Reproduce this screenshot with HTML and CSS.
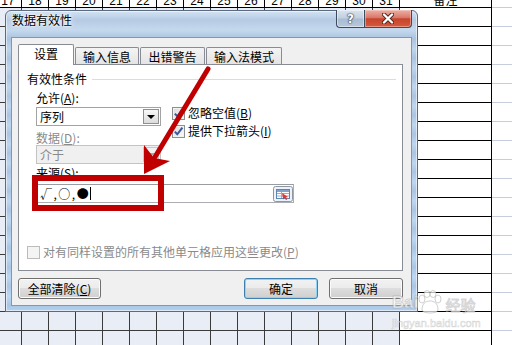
FILE: index.html
```html
<!DOCTYPE html>
<html lang="zh-CN">
    <head>
        <meta charset="UTF-8">
        <meta name="viewport" content="width=device-width, initial-scale=1.0">
        <title>数据有效性</title>
        <link rel="stylesheet" href="styles.css">
    </head>
    <body>

<!-- worksheet behind the dialog -->
<div class="sheet">
    <div class="head">
        <div class="nums">
            <div class="hc"><span>17</span></div>
            <div class="hc"><span>18</span></div>
            <div class="hc"><span>19</span></div>
            <div class="hc"><span>20</span></div>
            <div class="hc"><span>21</span></div>
            <div class="hc"><span>22</span></div>
            <div class="hc"><span>23</span></div>
            <div class="hc"><span>24</span></div>
            <div class="hc"><span>25</span></div>
            <div class="hc"><span>26</span></div>
            <div class="hc"><span>27</span></div>
            <div class="hc"><span>28</span></div>
            <div class="hc"><span>29</span></div>
            <div class="hc"><span>30</span></div>
            <div class="hc"><span>31</span></div>
        </div>
        <div class="note-h"><span>备注</span></div>
        <div class="rest-h"></div>
    </div>
    <div class="grid">
        <div class="cols"></div>
        <div class="note"></div>
        <div class="rest"></div>
    </div>
</div>

<!-- Data validation dialog -->
<div class="dialog">
    <div class="titlebar">
        <span class="title">数据有效性</span>
        <div class="caption">
            <span class="cap help">?</span>
            <span class="cap close">
                <svg width="12" height="11" viewBox="0 0 12 11">
                    <path d="M2 1.5 L10 9.5 M10 1.5 L2 9.5" stroke="#4a2a22" stroke-width="4.2" stroke-linecap="round"/>
                    <path d="M2 1.5 L10 9.5 M10 1.5 L2 9.5" stroke="#fff" stroke-width="2.4" stroke-linecap="round"/>
                </svg>
            </span>
        </div>
    </div>

    <div class="client">
        <div class="tabs">
            <span class="tab active">设置</span>
            <span class="tab t2">输入信息</span>
            <span class="tab t3">出错警告</span>
            <span class="tab t4">输入法模式</span>
        </div>

        <div class="panel">
            <div class="group-title">有效性条件</div>
            <div class="group">
                <div class="label first">允许(<u>A</u>):</div>
                <div class="row">
                    <div class="left">
                        <div class="combo"><span class="val">序列</span><span class="drop"></span></div>
                        <div class="label off gap5">数据(<u>D</u>):</div>
                        <div class="combo off"><span class="val">介于</span><span class="drop"></span></div>
                        <div class="label gap2">来源(<u>S</u>):</div>
                    </div>
                    <div class="checks">
                        <div class="check">
                            <span class="box">
                                <svg width="11" height="11" viewBox="0 0 11 11"><path d="M1.8 5.6 L4.3 8.3 L9.4 1.6" fill="none" stroke="#3a5a9c" stroke-width="2"/></svg>
                            </span>
                            忽略空值(<u>B</u>)
                        </div>
                        <div class="check">
                            <span class="box">
                                <svg width="11" height="11" viewBox="0 0 11 11"><path d="M1.8 5.6 L4.3 8.3 L9.4 1.6" fill="none" stroke="#3a5a9c" stroke-width="2"/></svg>
                            </span>
                            提供下拉箭头(<u>I</u>)
                        </div>
                    </div>
                </div>
                <div class="source">
                    <span class="val">√,○,●</span><span class="caret"></span>
                    <span class="pick">
                        <svg width="20" height="16" viewBox="0 0 20 16">
                            <rect x="0.5" y="0.5" width="19" height="15" rx="2" fill="#eef1f5" stroke="#8d96a1"/>
                            <rect x="3.5" y="3.5" width="13" height="9" fill="#fff" stroke="#5f84b6"/>
                            <rect x="4" y="4" width="12" height="2" fill="#7fa2cf"/>
                            <path d="M4 7.5h12M4 10h12M8.5 6v6" stroke="#8fb0d8"/>
                            <path d="M9 7 L15 11 L12.8 11.4 L14.2 13.4 L13 14 L11.6 12 L10.2 13.4 Z" fill="#e2352b"/>
                        </svg>
                    </span>
                </div>
            </div>
            <div class="check off apply">
                <span class="box"></span>
                对有同样设置的所有其他单元格应用这些更改(<u>P</u>)
            </div>
        </div>

        <div class="buttons">
            <span class="btn wide">全部清除(<u>C</u>)</span>
            <span class="btn default">确定</span>
            <span class="btn">取消</span>
        </div>
    </div>
</div>

<!-- red annotation -->
<div class="redbox"></div>
<svg class="arrow" width="512" height="345" viewBox="0 0 512 345">
    <line x1="208" y1="69" x2="155" y2="157" stroke="#c00000" stroke-width="5" stroke-linecap="round"/>
    <polygon points="144,174 144,145 154,158 170,161" fill="#c00000"/>
</svg>

<div class="watermark">
    <div class="wm-top">
        <span class="wm-bai">Bai</span>
        <svg class="wm-paw" width="26" height="25" viewBox="0 0 26 25">
            <g fill="rgba(255,255,255,0.7)" stroke="rgba(150,150,150,0.45)" stroke-width="1">
                <ellipse cx="6" cy="9" rx="3" ry="4"/>
                <ellipse cx="11" cy="4" rx="3" ry="3.5"/>
                <ellipse cx="17" cy="4" rx="3" ry="3.5"/>
                <ellipse cx="22" cy="9" rx="3" ry="4"/>
                <path d="M6 20 C6 13 10 11 14 11 C18 11 22 13 22 20 C22 24 6 24 6 20 Z"/>
            </g>
        </svg>
        <span class="wm-jy">经验</span>
    </div>
    <div class="wm-url">jingyan.baidu.com</div>
</div>

    </body>
</html>
```

FILE: styles.css
```css
body {
    margin: 0;
    width: 512px;
    height: 345px;
    overflow: hidden;
    position: relative;
    background: #fff;
    font-family: "Noto Sans CJK SC", sans-serif;
    font-size: 12px;
    color: #000;
}
u {
    text-decoration: underline;
    text-underline-offset: 1px;
}

/* worksheet */
.sheet {
    width: 512px;
    height: 345px;
}
.head {
    display: flex;
    height: 8px;
    overflow: hidden;
}
.nums {
    display: flex;
    width: 405px;
    margin-left: -5px;
    flex-shrink: 0;
}
.hc, .note-h {
    box-sizing: border-box;
    height: 8px;
    border-right: 1px solid #000;
    border-bottom: 1px solid #000;
    display: flex;
    align-items: flex-end;
    justify-content: center;
    overflow: hidden;
}
.hc {
    width: 27px;
    font-family: "Liberation Sans", sans-serif;
    font-size: 12px;
    line-height: 12px;
}
.note-h {
    width: 92px;
    flex-shrink: 0;
    line-height: 15px;
}
.rest-h {
    flex: 1;
    height: 8px;
    box-sizing: border-box;
    border-bottom: 1px solid #c6cede;
}
.grid {
    display: flex;
    height: 337px;
}
.cols {
    width: 400px;
    flex-shrink: 0;
    background-color: #e9edf5;
    background-image:
        linear-gradient(to right, transparent 26px, #3a3a3a 26px),
        linear-gradient(to bottom, transparent 18px, #3a3a3a 18px);
    background-size: 27px 100%, 100% 19px;
    background-position: -5px 0, 0 0;
}
.note {
    width: 92px;
    flex-shrink: 0;
    box-sizing: border-box;
    border-right: 1px solid #000;
    background-image: linear-gradient(to bottom, transparent 18px, #000 18px);
    background-size: 100% 19px;
}
.rest {
    flex: 1;
    background-image: linear-gradient(to bottom, transparent 18px, #c6cede 18px);
    background-size: 100% 19px;
}

/* dialog window */
.dialog {
    position: absolute;
    left: 5px;
    top: 10px;
    width: 413px;
    height: 302px;
    box-sizing: border-box;
    padding: 0 5px 5px 5px;
    border: 1px solid #5a6a80;
    border-radius: 6px 6px 0 0;
    background-color: #bcd6f0;
    background-image:
        repeating-linear-gradient(to bottom, rgba(120,150,195,0) 0, rgba(120,150,195,0.28) 9px, rgba(120,150,195,0) 19px),
        linear-gradient(to bottom, #d4e3f2 0, #bfd5ec 26px, #bcd8f4 100%);
    box-shadow: inset 0 0 0 1px rgba(255,255,255,0.55);
    display: flex;
    flex-direction: column;
}
.titlebar {
    height: 26px;
    display: flex;
    justify-content: space-between;
    flex-shrink: 0;
}
.title {
    padding: 2px 0 0 1px;
    line-height: 14px;
    text-shadow: 0 0 6px #fff, 0 0 3px #fff, 0 0 2px #fff;
}
.caption {
    display: flex;
    height: 18px;
    margin-top: -1px;
}
.cap {
    box-sizing: border-box;
    height: 18px;
    display: flex;
    align-items: center;
    justify-content: center;
    border: 1px solid #3d4b5e;
    border-top: none;
}
.help {
    width: 28px;
    border-right: none;
    border-radius: 0 0 0 4px;
    background: linear-gradient(to bottom, #dae4ef 0, #c2d0e0 45%, #a9bcd2 55%, #b7c8dc 100%);
    box-shadow: inset 0 0 0 1px rgba(255,255,255,0.45);
    font-family: "DejaVu Sans", sans-serif;
    font-weight: bold;
    font-size: 12px;
    line-height: 12px;
    color: #fff;
    text-shadow: 0 0 1px #2c3a4c, 0 0 1px #2c3a4c, 0 0 2px #2c3a4c;
}
.close {
    width: 48px;
    border-radius: 0 0 4px 0;
    background: linear-gradient(to bottom, #ebb1a4 0, #d9786a 45%, #c7442a 52%, #d35a3e 100%);
    box-shadow: inset 0 0 0 1px rgba(255,220,210,0.45);
}
.client {
    flex: 1;
    box-sizing: border-box;
    border: 1px solid #8397b0;
    background: #f0f0f0;
    padding: 6px 8px 0 6px;
}

/* tabs */
.tabs {
    display: flex;
    align-items: flex-end;
    gap: 1px;
    height: 20px;
}
.tab {
    box-sizing: border-box;
    height: 17px;
    padding-top: 1px;
    line-height: 15px;
    text-align: center;
    border: 1px solid #898c95;
    border-bottom: none;
    border-radius: 2px 2px 0 0;
    background: linear-gradient(to bottom, #f4f4f4, #e4e4e4);
}
.tab.active {
    width: 56px;
    height: 21px;
    margin-bottom: -1px;
    background: #fff;
    position: relative;
    z-index: 1;
}
.t2 { width: 64px; }
.t3 { width: 65px; }
.t4 { width: 76px; }

.panel {
    width: 385px;
    height: 207px;
    box-sizing: border-box;
    border: 1px solid #898c95;
    background: #fff;
    padding: 7px 6px 0 8px;
    display: flex;
    flex-direction: column;
}
.group-title {
    display: flex;
    align-items: center;
    line-height: 14px;
}
.group-title::after {
    content: "";
    flex: 1;
    height: 1px;
    margin-left: 5px;
    background: #d8dde2;
}
.group {
    padding-left: 9px;
}
.label {
    line-height: 14px;
}
.label.first { margin-top: 5px; }
.label.gap5 { margin-top: 5px; }
.label.gap2 { margin-top: 2px; }
.off {
    color: #8a8a8a;
}
.row {
    display: flex;
    margin-top: 2px;
}
.left {
    width: 125px;
}
.combo {
    box-sizing: border-box;
    height: 19px;
    border: 1px solid #a3a3a3;
    background: #fff;
    display: flex;
    align-items: center;
}
.combo .val {
    padding-left: 3px;
    line-height: 14px;
}
.drop {
    box-sizing: border-box;
    width: 16px;
    height: 15px;
    margin: 0 1px 0 auto;
    border: 1px solid #8f8f8f;
    background: linear-gradient(to bottom, #f8f8f8, #dcdcdc);
    display: flex;
    align-items: center;
    justify-content: center;
}
.drop::after {
    content: "";
    border-top: 4px solid #000;
    border-left: 4px solid transparent;
    border-right: 4px solid transparent;
}
.combo.off {
    background: #f0f0f0;
    border-color: #c3c3c3;
}
.combo.off .drop {
    border-color: #c9c9c9;
    background: #f2f2f2;
}
.combo.off .drop::after {
    border-top-color: #a8a8a8;
}
.checks {
    margin-left: 11px;
    margin-top: -3px;
}
.check {
    display: flex;
    align-items: center;
    height: 18px;
    line-height: 14px;
    white-space: nowrap;
}
.box {
    box-sizing: border-box;
    width: 13px;
    height: 13px;
    margin-right: 3px;
    border: 1px solid #8e8f8f;
    background: linear-gradient(135deg, #dadada, #fbfbfb);
    box-shadow: inset 0 0 0 1px #f2f2f2;
    display: flex;
    align-items: center;
    justify-content: center;
}
.check.off .box {
    border-color: #bcbcbc;
    background: #f4f4f4;
    box-shadow: none;
}
.source {
    box-sizing: border-box;
    width: 258px;
    height: 19px;
    margin-top: 4px;
    padding-left: 3px;
    border: 1px solid #abadb3;
    border-top-color: #9a9ca3;
    background: #fff;
    display: flex;
    align-items: center;
}
.source .val {
    line-height: 14px;
    letter-spacing: 1.5px;
}
.caret {
    width: 1px;
    height: 13px;
    background: #000;
}
.pick {
    margin: 0 0 0 auto;
    display: flex;
}
.apply {
    margin-top: auto;
    margin-bottom: 9px;
}

/* bottom buttons */
.buttons {
    display: flex;
    gap: 11px;
    width: 385px;
    margin-top: 7px;
}
.btn {
    box-sizing: border-box;
    width: 74px;
    height: 21px;
    border: 1px solid #707070;
    border-radius: 3px;
    background: linear-gradient(to bottom, #f2f2f2 0, #ebebeb 49%, #dddddd 50%, #cfcfcf 100%);
    box-shadow: inset 0 0 0 1px #fbfbfb;
    display: flex;
    align-items: center;
    justify-content: center;
    line-height: 14px;
}
.btn.wide {
    width: 83px;
}
.btn.default {
    margin-left: auto;
    border-color: #3c7fb1;
    box-shadow: inset 0 0 0 1px #8fd3f5;
}

/* annotation on top of the screenshot */
.redbox {
    position: absolute;
    left: 32px;
    top: 175px;
    width: 132px;
    height: 36px;
    box-sizing: border-box;
    border: 6px solid #c00000;
}
.arrow {
    position: absolute;
    left: 0;
    top: 0;
    pointer-events: none;
}

.watermark {
    position: absolute;
    left: 392px;
    top: 290px;
    color: rgba(255,255,255,0.7);
    -webkit-text-stroke: 1px rgba(150,150,150,0.4);
}
.wm-top {
    display: flex;
    align-items: flex-end;
}
.wm-bai {
    font-family: "Liberation Sans", sans-serif;
    font-weight: bold;
    font-size: 17px;
    line-height: 20px;
    margin-bottom: 2px;
}
.wm-paw {
    margin-left: -2px;
}
.wm-jy {
    font-size: 15px;
    line-height: 18px;
    margin-left: 3px;
    margin-bottom: 1px;
}
.wm-url {
    font-family: "Liberation Sans", sans-serif;
    font-size: 11px;
    line-height: 13px;
    margin-top: 2px;
    -webkit-text-stroke: 0.6px rgba(150,150,150,0.4);
}
```
